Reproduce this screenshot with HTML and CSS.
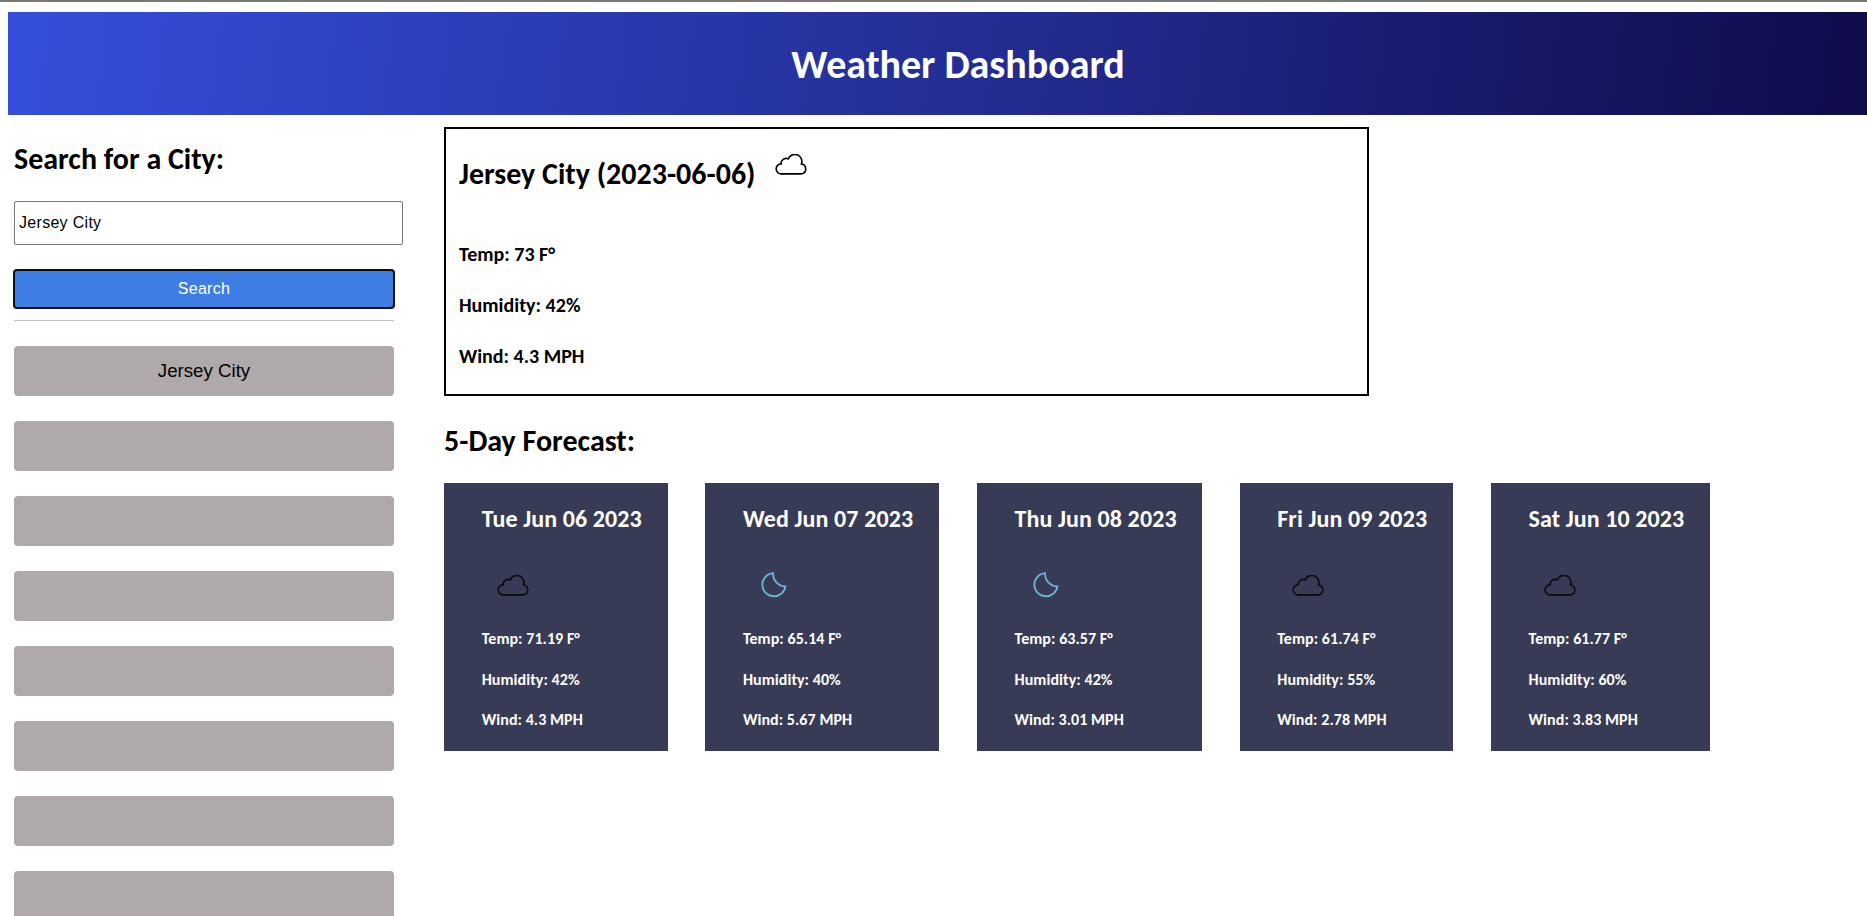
FILE: index.html
```
<!DOCTYPE html>
<html lang="en">
<head>
<meta charset="utf-8">
<title>Weather Dashboard</title>
<link rel="stylesheet" href="styles.css">
</head>
<body>
<svg class="defs" aria-hidden="true">
  <symbol id="cloud" viewBox="0 0 32 21"><path d="M6.2 19.9A5 5 0 0 1 6.1 9.9A5 5 0 0 1 13.2 4.9A7 7 0 0 1 26.4 10A5 5 0 0 1 26.4 19.9Z" fill="none" stroke="currentColor" stroke-width="1.6"/></symbol>
  <symbol id="moon" viewBox="0 0 26 26"><path d="M12.1 1.1A11.6 11.6 0 1 0 24.4 14.3A12.3 12.3 0 0 1 12.1 1.1Z" fill="none" stroke="currentColor" stroke-width="1.8"/></symbol>
</svg>
<header class="banner"><h1 class="banner-title">Weather Dashboard</h1></header>
<main class="layout">
  <aside class="sidebar">
    <h2 class="heading heading-search">Search for a City:</h2>
    <input class="city-input" type="text" value="Jersey City">
    <button class="search-btn">Search</button>
    <hr class="rule">
    <div class="history">
      <button class="history-btn">Jersey City</button>
      <button class="history-btn"></button>
      <button class="history-btn"></button>
      <button class="history-btn"></button>
      <button class="history-btn"></button>
      <button class="history-btn"></button>
      <button class="history-btn"></button>
      <button class="history-btn"></button>
    </div>
  </aside>
  <section class="content">
    <article class="current">
      <div class="current-head">
        <h2 class="heading heading-city">Jersey City (2023-06-06)</h2>
        <svg class="cloud"><use href="#cloud"/></svg>
      </div>
      <div class="current-stats">
        <p class="stat">Temp: 73 F°</p>
        <p class="stat">Humidity: 42%</p>
        <p class="stat">Wind: 4.3 MPH</p>
      </div>
    </article>
    <h2 class="heading heading-forecast">5-Day Forecast:</h2>
    <div class="forecast">
      <article class="day">
        <h3 class="day-title">Tue Jun 06 2023</h3>
        <div class="day-icon"><svg class="cloud"><use href="#cloud"/></svg></div>
        <p class="day-stat">Temp: 71.19 F°</p><p class="day-stat">Humidity: 42%</p><p class="day-stat">Wind: 4.3 MPH</p>
      </article>
      <article class="day">
        <h3 class="day-title">Wed Jun 07 2023</h3>
        <div class="day-icon"><svg class="moon"><use href="#moon"/></svg></div>
        <p class="day-stat">Temp: 65.14 F°</p><p class="day-stat">Humidity: 40%</p><p class="day-stat">Wind: 5.67 MPH</p>
      </article>
      <article class="day">
        <h3 class="day-title">Thu Jun 08 2023</h3>
        <div class="day-icon"><svg class="moon"><use href="#moon"/></svg></div>
        <p class="day-stat">Temp: 63.57 F°</p><p class="day-stat">Humidity: 42%</p><p class="day-stat">Wind: 3.01 MPH</p>
      </article>
      <article class="day">
        <h3 class="day-title">Fri Jun 09 2023</h3>
        <div class="day-icon"><svg class="cloud"><use href="#cloud"/></svg></div>
        <p class="day-stat">Temp: 61.74 F°</p><p class="day-stat">Humidity: 55%</p><p class="day-stat">Wind: 2.78 MPH</p>
      </article>
      <article class="day">
        <h3 class="day-title">Sat Jun 10 2023</h3>
        <div class="day-icon"><svg class="cloud"><use href="#cloud"/></svg></div>
        <p class="day-stat">Temp: 61.77 F°</p><p class="day-stat">Humidity: 60%</p><p class="day-stat">Wind: 3.83 MPH</p>
      </article>
    </div>
  </section>
</main>
</body>
</html>
```
FILE: styles.css
```
* { box-sizing: border-box; }
html { height: 100%; overflow: hidden; }
body {
  margin: 0;
  height: 100%;
  overflow: hidden;
  padding: 10px 0 0 8px;
  border-top: 2px solid #777;
  background: #fff;
  color: #000;
  font-family: Calibri, Carlito, Lato, sans-serif;
  font-weight: 700;
}
h1, h2, h3, p { margin: 0; white-space: nowrap; }
.defs { display: none; }
.banner {
  width: 1900px;
  height: 103px;
  background: linear-gradient(97deg, #344fdc, #202786 60%, #1a1f75 70%, #0f0b4a 99%);
  color: #fff;
  text-align: center;
}
.banner-title { font-size: 40px; line-height: 105px; }
.layout { display: flex; }
.sidebar { width: 436px; flex: none; padding: 27px 0 0 6px; }
.heading { font-size: 30px; line-height: 34px; }
.city-input {
  display: block;
  width: 389px;
  height: 44px;
  margin: 25px 0 25px;
  padding: 0 4px;
  border: 1px solid #767676;
  border-radius: 2px;
  font: 16px "Liberation Sans", Arial, sans-serif;
  letter-spacing: 0.3px;
}
.search-btn {
  display: block;
  width: 380px;
  height: 38px;
  padding: 0;
  border: 0;
  border-radius: 3px;
  outline: 2px solid #101010;
  outline-offset: -1px;
  background: #3e7de4;
  color: #fff;
  font: 16px "Liberation Sans", Arial, sans-serif;
  letter-spacing: 0.3px;
}
.rule { width: 380px; height: 1px; margin: 12px 0 25px; border: 0; background: #c0c0c0; }
.history { display: flex; flex-direction: column; gap: 25px; }
.history-btn {
  width: 380px;
  height: 50px;
  flex: none;
  padding: 0;
  border: 0;
  border-radius: 4px;
  background: #afa9a9;
  color: #000;
  font: 18.7px "Liberation Sans", Arial, sans-serif;
}
.content { padding-top: 12px; }
.current { width: 925px; height: 269px; padding: 28px 13px 0; border: 2px solid #000; }
.current-head { display: flex; gap: 20px; height: 33px; }
.heading-city { width: 296px; }
.cloud { display: block; width: 32px; height: 21px; }
.current-head .cloud { margin-top: -3px; }
.moon { display: block; width: 26px; height: 26px; color: #6db3d2; }
.current-stats { display: grid; gap: 27px; margin-top: 52px; }
.stat { font-size: 20px; line-height: 24px; }
.heading-forecast { margin: 28px 0 25px; }
.forecast { display: grid; grid-template-columns: 223.7px 234.2px 225.2px 213.8px 219px; column-gap: 37.5px; }
.day { height: 268px; padding: 23px 0 0 37.7px; background: #383b55; color: #fff; }
.day-title { font-size: 24px; line-height: 26px; letter-spacing: 0.1px; }
.day-icon { display: flex; height: 97px; padding: 43px 0 0 15px; }
.day-icon .cloud { color: #0a0a0a; }
.day-icon .moon { margin: -3px 0 0 3px; }
.day-stat { height: 40.5px; font-size: 16px; line-height: 20px; letter-spacing: 0.06px; }
```
